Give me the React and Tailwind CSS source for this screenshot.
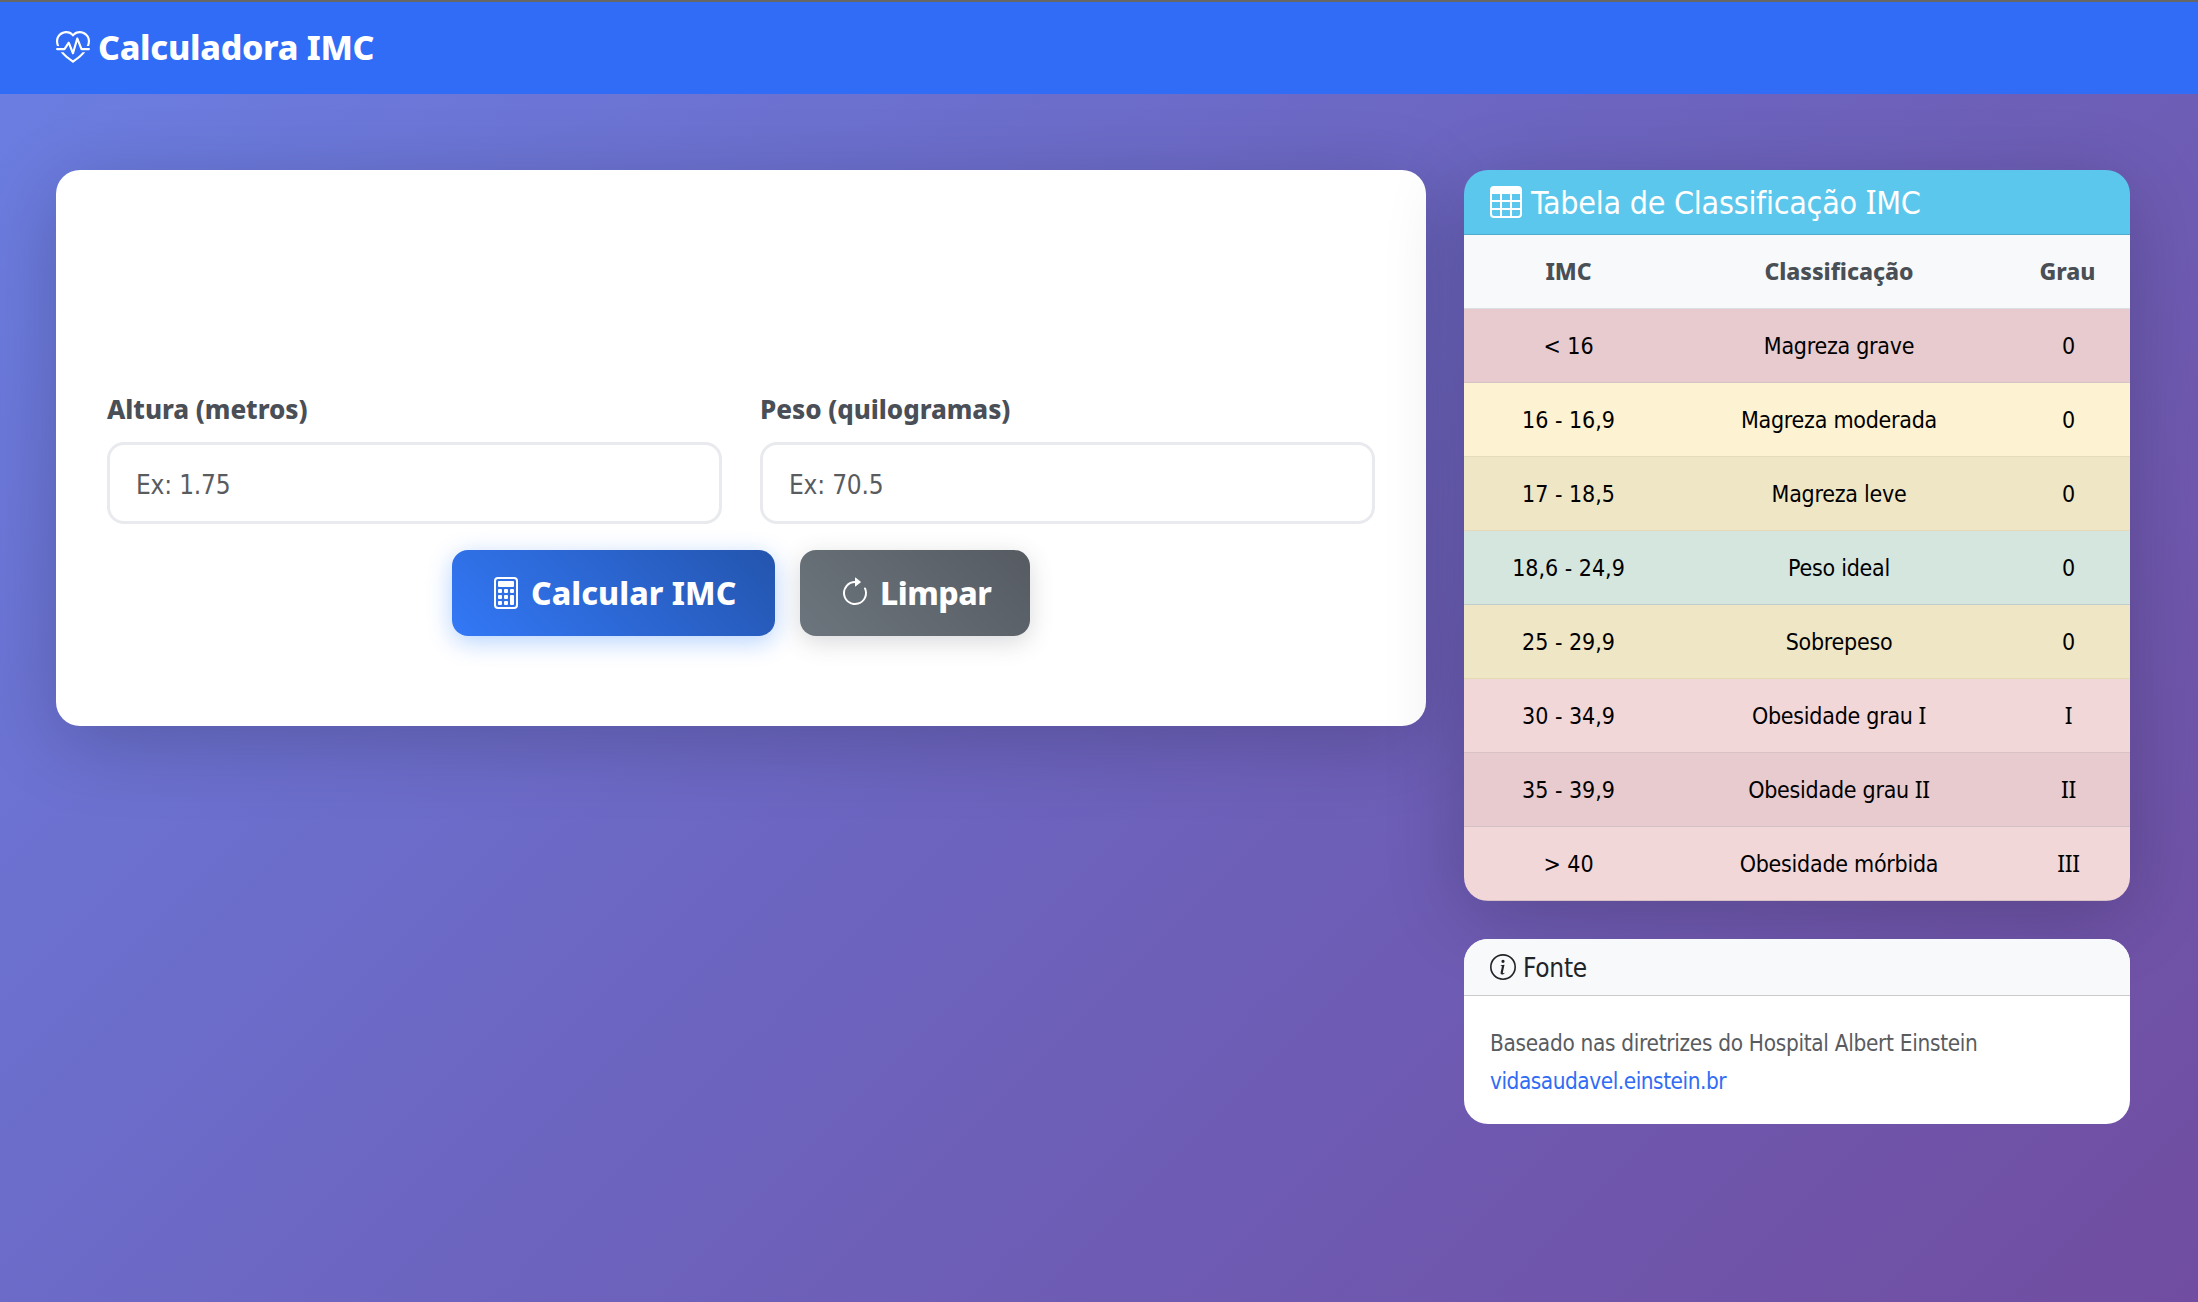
import React from "react";
import {
  BsHeartPulse,
  BsCalculator,
  BsArrowClockwise,
  BsTable,
  BsInfoCircle,
} from "react-icons/bs";

const rows = [
  { imc: "< 16", label: "Magreza grave", grau: "0", tone: "bg-[#e7cbcf] border-[#d5c3c6]" },
  { imc: "16 - 16,9", label: "Magreza moderada", grau: "0", tone: "bg-[#fdf2d1] border-[#e5dcbe]" },
  { imc: "17 - 18,5", label: "Magreza leve", grau: "0", tone: "bg-[#efe6c6] border-[#e6d8b8]" },
  { imc: "18,6 - 24,9", label: "Peso ideal", grau: "0", tone: "bg-[#d5e6de] border-[#bccdcb]" },
  { imc: "25 - 29,9", label: "Sobrepeso", grau: "0", tone: "bg-[#efe6c6] border-[#e6dcb2]" },
  { imc: "30 - 34,9", label: "Obesidade grau", suffix: "I", grau: "I", tone: "bg-[#f2d7d9] border-[#d9c2c5]" },
  { imc: "35 - 39,9", label: "Obesidade grau", suffix: "II", grau: "II", tone: "bg-[#e7cbcf] border-[#d5c1c5]" },
  { imc: "> 40", label: "Obesidade mórbida", grau: "III", tone: "bg-[#f2d7d9] border-[#d9c2c5]" },
];

function Field({ label, placeholder }) {
  return (
    <label className="flex flex-1 flex-col">
      <span className="mb-[14px] text-[26px] leading-[38px] font-extrabold tracking-[-0.05px] text-[#4a4f57]">
        {label}
      </span>
      <input
        placeholder={placeholder}
        className="h-[82px] w-full rounded-[17px] border-3 border-[#e9eaee] bg-white px-[26px] pt-[3px] font-['DejaVu_Sans_Condensed','Noto_Sans',sans-serif] text-[26px] tracking-[-0.2px] placeholder:text-[#595c5f]"
      />
    </label>
  );
}

export default function App() {
  return (
    <div className="flex h-[1302px] w-full flex-col overflow-hidden bg-linear-135 from-[#6b7fe3] via-[#6c64bf] to-[#704da0] font-['Noto_Sans',sans-serif]">
      <nav className="flex h-[94px] shrink-0 items-center border-t-2 border-[#666666] bg-[#306cf5] px-14 pb-[2px] text-white">
        <BsHeartPulse className="mt-[2px] size-[34px]" />
        <span className="ml-[8px] text-[34px] leading-none font-extrabold tracking-[-0.3px]">Calculadora IMC</span>
      </nav>

      <main className="flex items-start pt-[76px] pl-14">
        <section className="flex h-[556px] w-[1370px] shrink-0 flex-col rounded-3xl bg-white px-[51px] pt-[220px] shadow-[0_16px_80px_rgba(0,0,0,0.2)]">
          <div className="flex gap-[38px]">
            <Field label="Altura (metros)" placeholder="Ex: 1.75" />
            <Field label="Peso (quilogramas)" placeholder="Ex: 70.5" />
          </div>
          <div className="mt-[26px] flex justify-center gap-[25px] text-[32px] font-extrabold text-white">
            <button className="flex h-[86px] w-[323px] items-center rounded-2xl bg-linear-45 from-[#3378f7] to-[#2455ae] pl-[38px] shadow-[0_6px_24px_rgba(13,110,253,0.3)]">
              <BsCalculator className="size-8" />
              <span className="ml-[9px] tracking-[0.05px]">Calcular IMC</span>
            </button>
            <button className="flex h-[86px] w-[230px] items-center rounded-2xl bg-linear-45 from-[#6c757d] to-[#565b62] pl-[39px] shadow-[0_6px_24px_rgba(60,65,75,0.2)]">
              <BsArrowClockwise className="size-8" />
              <span className="ml-[9px] tracking-[-0.5px]">Limpar</span>
            </button>
          </div>
        </section>

        <aside className="ml-[38px] flex w-[666px] shrink-0 flex-col gap-[38px] font-['DejaVu_Sans_Condensed','Noto_Sans',sans-serif]">
          <section className="overflow-hidden rounded-3xl shadow-[0_16px_80px_rgba(0,0,0,0.2)]">
            <header className="flex h-[65px] items-center border-b border-[#50aac9] bg-[#5cc7ec] px-[26px] text-white">
              <BsTable className="size-8" />
              <h2 className="ml-[9px] text-[32px] tracking-[-0.28px]">
                Tabela de Classificação <span className="font-['Noto_Sans']">I</span>MC
              </h2>
            </header>
            <table className="w-full table-fixed border-collapse text-center text-[23px] leading-none tracking-[-0.26px] text-black">
              <colgroup>
                <col className="w-[209px]" />
                <col className="w-[332px]" />
                <col className="w-[125px]" />
              </colgroup>
              <thead>
                <tr className="h-[73px] border-b border-[#d9dfe0] bg-[#f8f9fb] font-['Noto_Sans'] tracking-[-0.05px] text-[#4a4f55]">
                  <th className="font-extrabold">IMC</th>
                  <th className="font-extrabold">Classificação</th>
                  <th className="font-extrabold">Grau</th>
                </tr>
              </thead>
              <tbody>
                {rows.map((r) => (
                  <tr key={r.imc} className={"h-[74px] border-b " + r.tone}>
                    <td className="pt-[2px] tracking-normal">{r.imc}</td>
                    <td className="pt-[2px]">
                      {r.label}
                      {r.suffix && <span className="font-['Noto_Sans']"> {r.suffix}</span>}
                    </td>
                    <td className={r.grau === "0" ? "pt-[2px] pl-[2px]" : "pl-[2px] font-['Noto_Sans']"}>{r.grau}</td>
                  </tr>
                ))}
              </tbody>
            </table>
          </section>

          <section className="h-[185px] overflow-hidden rounded-3xl bg-white">
            <header className="flex h-[57px] items-center border-b border-[#c9cacc] bg-[#f8f9fb] px-[26px] text-[#212529]">
              <BsInfoCircle className="size-[26px]" />
              <h3 className="ml-[7px] pt-[3px] text-[26px] tracking-[-0.25px]">Fonte</h3>
            </header>
            <div className="px-[26px] pt-[28px] text-[22.4px] leading-[38px]">
              <p className="tracking-[-0.3px] text-[#595c5f]">
                Baseado nas diretrizes do Hospital Albert Einstein
              </p>
              <a className="tracking-[-0.46px] text-[#306cf5]">vidasaudavel.einstein.br</a>
            </div>
          </section>
        </aside>
      </main>
    </div>
  );
}
